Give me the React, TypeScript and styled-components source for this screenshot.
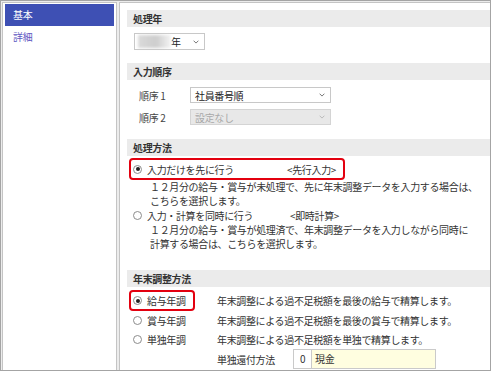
import React from 'react';
import styled, { createGlobalStyle } from 'styled-components';

const GlobalStyle = createGlobalStyle`
  * { box-sizing: border-box; }
  body {
    margin: 0;
    background: #fff;
    color: #333;
    font-family: "Noto Sans CJK JP", "Noto Sans", sans-serif;
    font-size: 10px;
    letter-spacing: -0.35px;
  }
`;

const Chevron = ({ color = '#777' }: { color?: string }) => (
  <svg width="6" height="4" viewBox="0 0 6 4">
    <path d="M0.6 0.7 L3 3.1 L5.4 0.7" fill="none" stroke={color} strokeWidth="1" />
  </svg>
);

const sideItems = [
  { label: '基本', active: true },
  { label: '詳細', active: false },
];

const adjustRows = [
  { label: '給与年調', checked: true, text: '年末調整による過不足税額を最後の給与で精算します。' },
  { label: '賞与年調', checked: false, text: '年末調整による過不足税額を最後の賞与で精算します。' },
  { label: '単独年調', checked: false, text: '年末調整による過不足税額を単独で精算します。' },
];

export default function App() {
  return (
    <>
      <GlobalStyle />
      <Frame>
        <Sidebar>
          {sideItems.map((item) => (
            <SideItem key={item.label} $active={item.active}>
              {item.label}
            </SideItem>
          ))}
        </Sidebar>
        <Panel>
          <SectionHeader>処理年</SectionHeader>
          <YearBody>
            <Select $width={71} $height={17}>
              <YearValue>
                <Blurred />
                年
              </YearValue>
              <Chevron />
            </Select>
          </YearBody>

          <SectionHeader>入力順序</SectionHeader>
          <OrderBody>
            <OrderRow>
              <OrderLabel>順序 1</OrderLabel>
              <Select $width={141} $height={16}>
                <span>社員番号順</span>
                <Chevron />
              </Select>
            </OrderRow>
            <OrderRow>
              <OrderLabel>順序 2</OrderLabel>
              <Select $width={141} $height={16} $disabled>
                <span>設定なし</span>
                <Chevron color="#bbb" />
              </Select>
            </OrderRow>
          </OrderBody>

          <SectionHeader>処理方法</SectionHeader>
          <MethodBody>
            <RadioRow $highlight $height={22}>
              <Radio $checked />
              <MethodLabel $width={140}>入力だけを先に行う</MethodLabel>
              <span>&lt;先行入力&gt;</span>
            </RadioRow>
            <Desc>
              <DescLine>１２月分の給与・賞与が未処理で、先に年末調整データを入力する場合は、</DescLine>
              <DescLine>こちらを選択します。</DescLine>
            </Desc>
            <RadioRow $height={14}>
              <Radio />
              <MethodLabel $width={143}>入力・計算を同時に行う</MethodLabel>
              <span>&lt;即時計算&gt;</span>
            </RadioRow>
            <Desc>
              <DescLine>１２月分の給与・賞与が処理済で、年末調整データを入力しながら同時に</DescLine>
              <DescLine>計算する場合は、こちらを選択します。</DescLine>
            </Desc>
          </MethodBody>

          <SectionHeader>年末調整方法</SectionHeader>
          <AdjustGrid>
            {adjustRows.map((row) => (
              <React.Fragment key={row.label}>
                <div>
                  <RadioRow $highlight={row.checked} $height={21}>
                    <Radio $checked={row.checked} />
                    <span>{row.label}</span>
                  </RadioRow>
                </div>
                <span>{row.text}</span>
              </React.Fragment>
            ))}
            <div />
            <RefundRow>
              <RefundLabel>単独還付方法</RefundLabel>
              <CodeInput>
                <CodeCell>0</CodeCell>
                <NameCell>現金</NameCell>
              </CodeInput>
            </RefundRow>
          </AdjustGrid>
        </Panel>
      </Frame>
    </>
  );
}

const Frame = styled.div`
  display: flex;
  gap: 2px;
  width: 491px;
  height: 371px;
  padding: 1px 0 0 1px;
  border: 1px solid #a4a4a4;
  background: #ececec;
`;

const Sidebar = styled.div`
  width: 115px;
  padding: 1px 2px 0 2px;
  border: 1px solid #c4c4c4;
  border-bottom: none;
  background: #fff;
`;

const SideItem = styled.div<{ $active: boolean }>`
  height: 22px;
  line-height: 22px;
  padding-left: 8px;
  background: ${({ $active }) => ($active ? '#3e50b4' : 'transparent')};
  color: ${({ $active }) => ($active ? '#fff' : '#5f58c2')};
`;

const Panel = styled.div`
  flex: 1;
  display: flex;
  flex-direction: column;
  padding: 7px 0 0 7px;
  border: 1px solid #c4c4c4;
  border-right: none;
  border-bottom: none;
  background: #fff;
`;

const SectionHeader = styled.div`
  height: 17px;
  line-height: 17px;
  padding-left: 6px;
  background: #ebebeb;
  font-weight: 700;
  color: #333;
`;

const Select = styled.div<{ $width: number; $height: number; $disabled?: boolean }>`
  display: flex;
  align-items: center;
  justify-content: space-between;
  width: ${({ $width }) => $width}px;
  height: ${({ $height }) => $height}px;
  padding: 0 5px 0 4px;
  border: 1px solid ${({ $disabled }) => ($disabled ? '#d4d4d4' : '#c8c8c8')};
  background: ${({ $disabled }) => ($disabled ? '#e8e8e8' : '#fff')};
  color: ${({ $disabled }) => ($disabled ? '#a8a8a8' : '#222')};
`;

const YearBody = styled.div`
  padding: 6px 0 13px 7px;
`;

const YearValue = styled.span`
  display: flex;
  align-items: center;
  margin-left: -1px;
`;

const Blurred = styled.span`
  width: 33px;
  height: 13px;
  background: linear-gradient(90deg, #dadada, #cdcdcd 55%, #f4f4f4);
  filter: blur(1.5px);
`;

const OrderBody = styled.div`
  display: flex;
  flex-direction: column;
  gap: 6px;
  padding: 7px 0 14px 12px;
`;

const OrderRow = styled.div`
  display: flex;
  align-items: center;
`;

const OrderLabel = styled.span`
  width: 51px;
  color: #444;
`;

const MethodBody = styled.div`
  padding: 2px 0 19px 2px;
`;

const RadioRow = styled.div<{ $highlight?: boolean; $height: number }>`
  display: inline-flex;
  align-items: center;
  height: ${({ $height }) => $height}px;
  padding: 0 7px 0 2px;
  border: 2px solid ${({ $highlight }) => ($highlight ? '#e3000f' : 'transparent')};
  border-radius: 4px;
  border-top-width: ${({ $highlight }) => ($highlight ? 2 : 0)}px;
  border-bottom-width: ${({ $highlight }) => ($highlight ? 2 : 0)}px;
  white-space: nowrap;
`;

const Radio = styled.span<{ $checked?: boolean }>`
  display: inline-flex;
  align-items: center;
  justify-content: center;
  flex-shrink: 0;
  width: 9px;
  height: 9px;
  margin-right: 5px;
  border: 1px solid #8c8c8c;
  border-radius: 50%;
  background: #fff;

  &::after {
    content: '';
    display: ${({ $checked }) => ($checked ? 'block' : 'none')};
    width: 4px;
    height: 4px;
    border-radius: 50%;
    background: #222;
  }
`;

const MethodLabel = styled.span<{ $width: number }>`
  width: ${({ $width }) => $width}px;
`;

const Desc = styled.div`
  padding-left: 21px;
  white-space: nowrap;
`;

const DescLine = styled.div`
  height: 14px;
  line-height: 14px;
`;

const AdjustGrid = styled.div`
  display: grid;
  grid-template-columns: 88px 1fr;
  grid-template-rows: 21px 19px 19px 20px;
  align-items: center;
  padding: 3px 0 0 2px;
  white-space: nowrap;
`;

const RefundRow = styled.div`
  display: flex;
  align-items: center;
`;

const RefundLabel = styled.span`
  width: 76px;
`;

const CodeInput = styled.div`
  display: flex;
  width: 143px;
  height: 20px;
  border: 1px solid #cacaca;
`;

const CodeCell = styled.span`
  width: 18px;
  line-height: 18px;
  text-align: center;
  border-right: 1px solid #cacaca;
  background: #fff;
`;

const NameCell = styled.span`
  flex: 1;
  padding-left: 3px;
  line-height: 18px;
  background: #fffee0;
`;
